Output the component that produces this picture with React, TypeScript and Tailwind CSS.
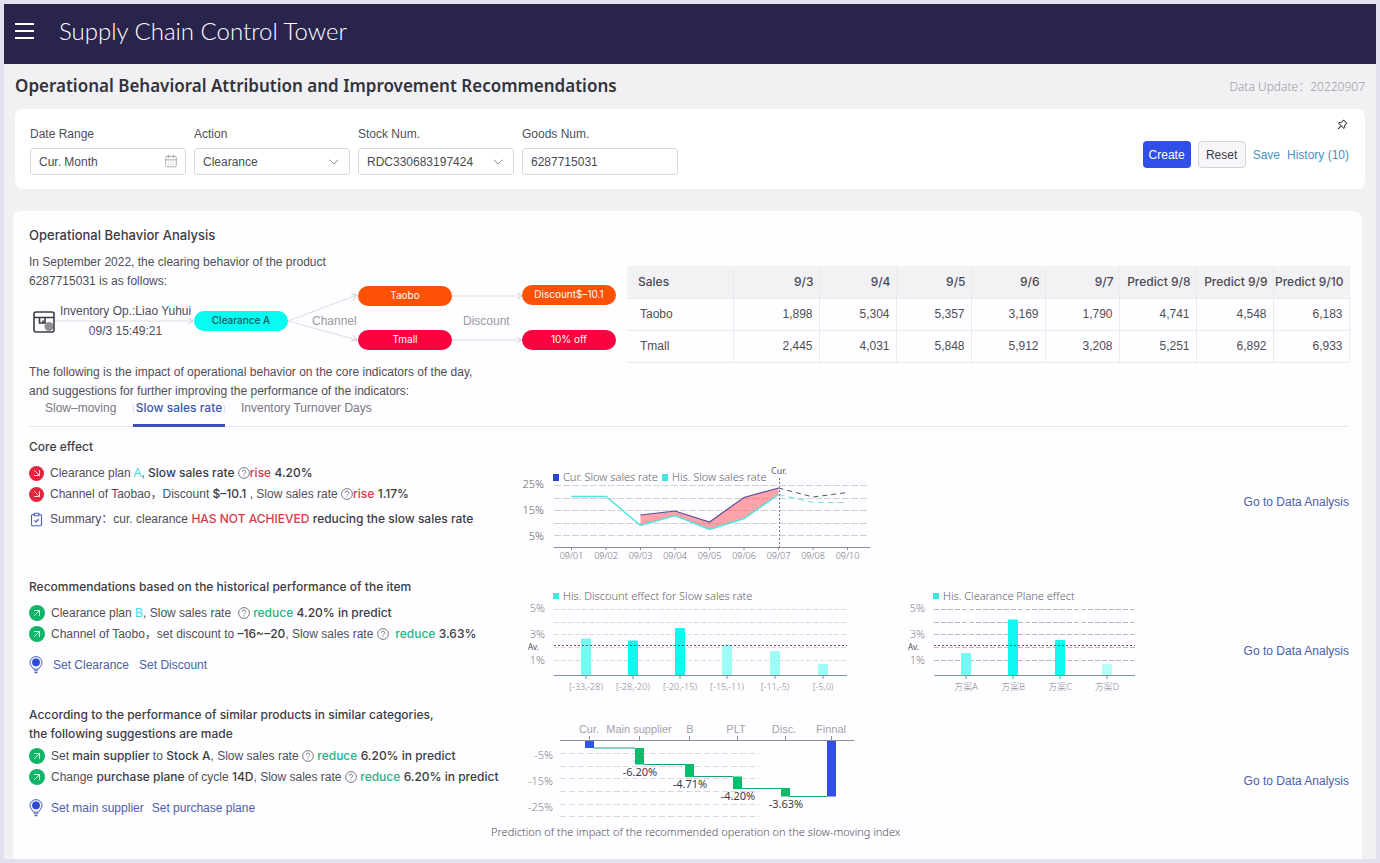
import React from "react";
import { ArrowDownRight, ArrowUpRight, CalendarDays, ChevronDown, ClipboardCheck } from "lucide-react";
import { AiOutlinePushpin } from "react-icons/ai";

const salesHead = ["9/3", "9/4", "9/5", "9/6", "9/7", "Predict 9/8", "Predict 9/9", "Predict 9/10"];
const salesRows = [
  { name: "Taobo", values: ["1,898", "5,304", "5,357", "3,169", "1,790", "4,741", "4,548", "6,183"] },
  { name: "Tmall", values: ["2,445", "4,031", "5,848", "5,912", "3,208", "5,251", "6,892", "6,933"] },
];

const HelpIcon = () => (
  <svg viewBox="0 0 12 12" className="inline-block size-3 shrink-0 align-[-2px]" fill="none" stroke="#6b6b76">
    <circle cx="6" cy="6" r="5.4" strokeWidth="0.9" />
    <path d="M4.3 4.8a1.7 1.7 0 1 1 2.5 1.5c-.5.3-.8.5-.8 1.1M6 8.4v.9" strokeWidth="0.9" />
  </svg>
);

const BulbIcon = () => (
  <svg viewBox="0 0 14 18" className="h-[18px] w-[14px] shrink-0" fill="none" stroke="#4c61b8">
    <path d="M4.5 13.2C3.6 11.2 1 9.7 1 6.6a6 6 0 0 1 12 0c0 3.1-2.6 4.6-3.5 6.6z" fill="#eef0fb" />
    <circle cx="7" cy="6.3" r="3.9" fill="#2f49d1" stroke="none" />
    <path d="M5 14.8h4M5.6 16.6h2.8" strokeWidth="1.1" />
  </svg>
);

const StoreIcon = () => (
  <svg viewBox="0 0 22 22" className="size-[22px]" fill="none" stroke="#3c3c44" strokeWidth="1.6">
    <circle cx="16" cy="15.5" r="4.5" fill="#8f8f96" stroke="none" />
    <rect x="1" y="1" width="20" height="20" rx="2" />
    <path d="M1 6.5h20M6.500 7v5h3.500V9.500M10 12h2V7" />
  </svg>
);

const Down = () => (
  <span className="flex size-[15px] shrink-0 items-center justify-center rounded-full bg-[#e0263c] text-[#ffd5d8]">
    <ArrowDownRight size={12} />
  </span>
);

const Up = () => (
  <span className="flex size-4 shrink-0 items-center justify-center rounded-full bg-[#10b668] text-[#d3ffe8]">
    <ArrowUpRight size={12} />
  </span>
);

const Line: any = ({ icon, children }: any) => (
  <li className="flex h-[21px] items-center gap-1.5 whitespace-pre">
    {icon}
    <span>{children}</span>
  </li>
);

const B: any = ({ children }: any) => <span className="font-[Inter] font-medium text-[#3c3c44]">{children}</span>;
const Red: any = ({ children }: any) => <span className="font-[Inter] font-medium text-[#d63c4c]">{children}</span>;
const Green: any = ({ children }: any) => <span className="font-[Inter] font-medium text-[#27b383]">{children}</span>;

const Field: any = ({ id, label, children }: any) => (
  <div className="w-[156px]">
    <label htmlFor={id} className="block leading-4">
      {label}
    </label>
    <div className="relative mt-1.5">{children}</div>
  </div>
);

const fieldClass =
  "block h-[27px] w-full appearance-none rounded-[3px] border border-[#d9d9de] bg-white px-2 text-xs text-[#4a4a52]";

const Pill: any = ({ className, children }: any) => (
  <span
    className={`absolute flex h-5 w-[94px] items-center justify-center rounded-full font-[Inter] text-[10px] ${className}`}
  >
    {children}
  </span>
);

const Flow = () => (
  <div className="relative -mt-1.5 h-[66px] w-[588px]">
    <svg viewBox="0 0 588 66" className="h-[66px] w-[588px]" fill="none" stroke="#dcdce3">
      <path d="M26 36h138M259 36L328 10M259 36L328 55M423 11h70M423 55h70" />
      <path d="M159 33l5 3l-5 3M322 9l6 1l-4 5M324 50l4 5l-6 1M488 8l5 3l-5 3M488 52l5 3l-5 3" stroke="#cfcfd8" />
    </svg>
    <span className="absolute top-[26px] left-1">
      <StoreIcon />
    </span>
    <span className="absolute top-4 left-[31px] w-[131px] text-center leading-5 whitespace-nowrap">
      Inventory Op.:Liao Yuhui
    </span>
    <span className="absolute top-9 left-[31px] w-[131px] text-center leading-5">09/3 15:49:21</span>
    <Pill className="top-[26px] left-[165px] bg-[#08fbf0] font-medium text-[#17585f]">Clearance A</Pill>
    <span className="absolute top-[26px] left-[283px] leading-5 text-[#9a9aa3]">Channel</span>
    <Pill className="top-px left-[329px] bg-[#fd5206] text-white">Taobo</Pill>
    <Pill className="top-[45px] left-[329px] bg-[#fb0240] text-white">Tmall</Pill>
    <span className="absolute top-[26px] left-[434px] leading-5 text-[#9a9aa3]">Discount</span>
    <Pill className="top-0 left-[493px] bg-[#fd5206] text-white">Discount$–10.1</Pill>
    <Pill className="top-[45px] left-[493px] bg-[#fb0240] text-white">10% off</Pill>
  </div>
);

const SalesTable = () => (
  <table className="mt-[13px] w-full table-fixed border-collapse text-right">
    <colgroup>
      <col className="w-[106px]" />
      <col className="w-[86px]" />
      <col className="w-[77px]" />
      <col className="w-[75px]" />
      <col className="w-[74px]" />
      <col className="w-[74px]" />
      <col className="w-[77px]" />
      <col className="w-[77px]" />
      <col className="w-[76px]" />
    </colgroup>
    <thead>
      <tr className="h-8 bg-[#f2f2f5] font-[Inter] text-[#4a4a52]">
        <th className="border-r border-b border-[#ebebef] pl-[11px] text-left font-medium">Sales</th>
        {salesHead.map((day) => (
          <th key={day} className="border-r border-b border-[#ebebef] pr-[5px] font-medium whitespace-nowrap">
            {day}
          </th>
        ))}
      </tr>
    </thead>
    <tbody>
      {salesRows.map((row) => (
        <tr key={row.name} className="h-8">
          <td className="border-r border-b border-[#ebebef] pl-[13px] text-left">{row.name}</td>
          {row.values.map((value) => (
            <td key={value} className="border-r border-b border-[#ebebef] pr-[6px]">
              {value}
            </td>
          ))}
        </tr>
      ))}
    </tbody>
  </table>
);

const days = ["09/01", "09/02", "09/03", "09/04", "09/05", "09/06", "09/07", "09/08", "09/10"];
const dayX = (i: number) => 51.5 + 34.5 * i;
const curRate = [53, 49, 60, 35.5, 26];
const hisRate = [34.5, 34.5, 63.5, 53.5, 67.5, 56.5, 32.5];
const points = (ys: number[], start: number) => ys.map((y, i) => `${dayX(i + start)},${y}`);

const RateChart = () => (
  <svg viewBox="0 0 352 102" className="h-[102px] w-[352px] font-light" fill="#5f5f68">
    <rect x="33" y="12" width="6" height="7" fill="#2b44cf" />
    <text x="43" y="19" fontSize="11">Cur. Slow sales rate</text>
    <rect x="142" y="12" width="6" height="7" fill="#3fe8dc" />
    <text x="152" y="19" fontSize="11">His. Slow sales rate</text>
    <text x="259" y="12" fontSize="9" textAnchor="middle" fontWeight="400">Cur.</text>
    {["25%", "15%", "5%"].map((t, i) => (
      <text key={t} x="24" y={26 + 26 * i} fontSize="11" textAnchor="end">{t}</text>
    ))}
    {[23.5, 36.5, 48.5, 61.5, 73.5].map((y) => (
      <path key={y} d={`M34 ${y}H347`} stroke="#d3cfd6" strokeDasharray="7 2" />
    ))}
    <path d="M34 85.5H350" stroke="#8d8d96" />
    <polygon points={[...points(curRate, 2), ...points(hisRate.slice(2), 2).reverse()].join(" ")} fill="#ff4a55" fillOpacity="0.5" />
    <polyline points={points(hisRate, 0).join(" ")} fill="none" stroke="#4fe3da" strokeWidth="1.5" />
    <polyline points={points(curRate, 2).join(" ")} fill="none" stroke="#5a4ba0" strokeWidth="1.2" />
    <polyline points={points([32.5, 40.5, 40.5], 6).join(" ")} fill="none" stroke="#7ce9e2" strokeDasharray="6 4" strokeWidth="1.2" />
    <polyline points={points([26, 35, 30.5], 6).join(" ")} fill="none" stroke="#55555e" strokeDasharray="5 4" />
    <path d="M259.5 16V85" stroke="#77777f" strokeDasharray="2 2" />
    {days.map((d, i) => (
      <g key={d}>
        <path d={`M${dayX(i)} 85v3`} stroke="#8d8d96" />
        <text x={dayX(i)} y="97" fontSize="9" textAnchor="middle" fill="#6f6f78">{d}</text>
      </g>
    ))}
  </svg>
);

const discountBars = [
  { label: "[-33,-28)", x: 66, y: 52.5, fill: "#74fbf3" },
  { label: "[-28,-20)", x: 113, y: 54.5, fill: "#0df8ee" },
  { label: "[-20,-15)", x: 160, y: 42, fill: "#0df8ee" },
  { label: "[-15,-11)", x: 207, y: 58.5, fill: "#9dfcf6" },
  { label: "[-11,-5)", x: 255, y: 65, fill: "#9dfcf6" },
  { label: "[-5,0)", x: 303, y: 78, fill: "#9dfcf6" },
];
const planBars = [
  { label: "方案A", x: 66, y: 67, fill: "#74fbf3" },
  { label: "方案B", x: 113, y: 33.5, fill: "#0df8ee" },
  { label: "方案C", x: 160, y: 54, fill: "#0df8ee" },
  { label: "方案D", x: 207, y: 78, fill: "#b4fdf9" },
];

const BarChart: any = ({ title, bars, width, end, grid }: any) => (
  <svg viewBox={`0 0 ${width} 108`} width={width} height="108" className="shrink-0 font-light" fill="#85858e">
    <rect x="33" y="7" width="6" height="6" fill="#3fe8dc" />
    <text x="43" y="14" fontSize="11" fill="#5f5f68">{title}</text>
    {["5%", "3%", "1%"].map((t, i) => (
      <text key={t} x="25" y={26 + 26 * i} fontSize="11" textAnchor="end">{t}</text>
    ))}
    <text x="19" y="64" fontSize="8" textAnchor="end" fill="#4a4a52" fontWeight="400">Av.</text>
    {[23.5, 36.5, 48.5, 61.5, 74.5].map((y) => (
      <path key={y} d={`M34 ${y}H${end}`} stroke={grid} strokeDasharray="5 2" />
    ))}
    {bars.map((bar: any) => (
      <g key={bar.label}>
        <path d={`M${bar.x - 5} 89V${bar.y + 1}q0-1 1-1h8q1 0 1 1V89z`} fill={bar.fill} />
        <path d={`M${bar.x} 89v4`} stroke="#5f9c9c" />
        <text x={bar.x} y="104" fontSize="9" textAnchor="middle">{bar.label}</text>
      </g>
    ))}
    <path d={`M34 59.5H${end}`} stroke="#7a4570" strokeDasharray="2 2" />
    <path d={`M34 89.5H${end}`} stroke="#7f9696" />
  </svg>
);

const steps = [
  { label: "Cur.", at: 69, x: 65, top: 24, bottom: 32, fill: "#2f55e3" },
  { label: "Main supplier", at: 119, x: 115, top: 32, bottom: 48.5, fill: "#0dbb6c", value: "-6.20%" },
  { label: "B", at: 170, x: 165, top: 48, bottom: 61, fill: "#0dbb6c", value: "-4.71%" },
  { label: "PLT", at: 216, x: 213, top: 60.5, bottom: 73, fill: "#0dbb6c", value: "-4.20%" },
  { label: "Disc.", at: 264, x: 261, top: 72, bottom: 80.5, fill: "#0dbb6c", value: "-3.63%" },
  { label: "Finnal", at: 311, x: 307, top: 24, bottom: 80.5, fill: "#2f4fe8" },
];

const WaterfallChart = () => (
  <svg viewBox="0 0 340 104" className="h-[104px] w-[340px] font-light" fill="#85858e">
    {[37.5, 50.5, 62.5, 75.5, 88.5, 100.5].map((y) => (
      <path key={y} d={`M40 ${y}H239`} stroke="#dcd5de" strokeDasharray="6 3" />
    ))}
    {["-5%", "-15%", "-25%"].map((t, i) => (
      <text key={t} x="33" y={43 + 26 * i} fontSize="11" textAnchor="end">{t}</text>
    ))}
    <path d="M74 32H115M124 48.5H165M174 60.5H213M222 72.5H261M270 80.5H307" stroke="#1a9f70" />
    {steps.map((s) => (
      <g key={s.label}>
        <text x={s.at} y="17" fontSize="11" textAnchor="middle" className="font-['Liberation_Sans']" fill="#a3a3ac">
          {s.label}
        </text>
        <path d={`M${s.x + 4.5} 20v4`} stroke="#8d8d96" />
        <rect x={s.x} y={s.top} width="9" height={s.bottom - s.top} fill={s.fill} />
        {s.value && (
          <text x={s.x + 5} y={s.bottom + 11} fontSize="11" textAnchor="middle" fill="#3c3c44" fontWeight="400">
            {s.value}
          </text>
        )}
      </g>
    ))}
    <path d="M40 24.5H334" stroke="#8d8d96" />
  </svg>
);

const Analysis = () => (
  <a href="#analysis" className="leading-5 whitespace-nowrap text-[#4c61a8]">
    Go to Data Analysis
  </a>
);

export default function App() {
  return (
    <div className="flex min-h-screen flex-col border-4 border-[#e1e1ef] bg-[#f1f1f4] font-['Liberation_Sans','Noto_Sans_CJK_SC',sans-serif] text-xs text-[#4f4f58]">
      <header className="flex h-[60px] shrink-0 items-center gap-[25px] bg-[#29244c] pb-1.5 pl-[11px] text-white">
        <button type="button" aria-label="Menu" className="flex w-[19px] flex-col gap-[5px]">
          <span className="h-0.5 bg-white" />
          <span className="h-0.5 bg-white" />
          <span className="h-0.5 bg-white" />
        </button>
        <span className="font-[Lato] text-2xl font-light">Supply Chain Control Tower</span>
      </header>

      <div className="flex h-[45px] items-center justify-between px-[11px]">
        <h1 className="font-['Noto_Sans'] text-[17px] font-semibold text-[#33333a]">
          Operational Behavioral Attribution and Improvement Recommendations
        </h1>
        <span className="font-['Noto_Sans','Noto_Sans_CJK_SC'] font-light text-[#9a9aa3]">Data Update：20220907</span>
      </div>

      <form className="mx-[11px] flex h-20 justify-between rounded-lg bg-white pr-4 pl-[15px]">
        <div className="flex gap-2 pt-[17px]">
          <Field id="range" label="Date Range">
            <input id="range" className={fieldClass} defaultValue="Cur. Month" />
            <CalendarDays size={14} strokeWidth={1.2} className="absolute top-1.5 right-2 text-[#8d8d96]" />
          </Field>
          <Field id="action" label="Action">
            <select id="action" className={fieldClass}>
              <option>Clearance</option>
            </select>
            <ChevronDown size={16} strokeWidth={1.5} className="absolute top-1.5 right-2 text-[#8d8d96]" />
          </Field>
          <Field id="stock" label="Stock Num.">
            <select id="stock" className={fieldClass}>
              <option>RDC330683197424</option>
            </select>
            <ChevronDown size={16} strokeWidth={1.5} className="absolute top-1.5 right-2 text-[#8d8d96]" />
          </Field>
          <Field id="goods" label="Goods Num.">
            <input id="goods" className={fieldClass} defaultValue="6287715031" />
          </Field>
        </div>
        <div className="flex flex-col items-end gap-2.5 pt-[9px]">
          <button type="button" aria-label="Pin" className="text-[#33333a]">
            <AiOutlinePushpin size={13} />
          </button>
          <div className="flex items-center gap-[7px]">
            <button type="button" className="h-[27px] w-12 rounded bg-[#2f4fe8] text-white">
              Create
            </button>
            <button type="button" className="h-[27px] w-12 rounded border border-[#d3d3d9] bg-[#f8f5f9] text-[#3c3c44]">
              Reset
            </button>
            <a href="#save" className="text-[#4693bf]">Save</a>
            <a href="#history" className="text-[#4693bf]">History (10)</a>
          </div>
        </div>
      </form>

      <main className="mt-[22px] mr-3.5 ml-[9px] grow rounded-t-lg bg-[#fefdff] pt-3.5 pr-[13px] pb-4 pl-4">
        <h2 className="font-[Inter] text-[13px] leading-5 font-medium text-[#3c3c44]">Operational Behavior Analysis</h2>
        <div className="mt-2 flex gap-[10px]">
          <div className="shrink-0">
            <p className="leading-[19px]">
              In September 2022, the clearing behavior of the product
              <br />
              6287715031 is as follows:
            </p>
            <Flow />
          </div>
          <SalesTable />
        </div>
        <p className="leading-[19px]">
          The following is the impact of operational behavior on the core indicators of the day,
          <br />
          and suggestions for further improving the performance of the indicators:
        </p>

        <nav className="flex h-[26px] items-stretch border-b border-[#e6e6ec] leading-[14px] text-[#77777f]">
          <a href="#moving" className="w-[104px] pl-4">Slow–moving</a>
          <a
            href="#rate"
            className="-mb-px flex w-[92px] items-start justify-between border-b-3 border-[#3f51b5] font-[Inter] font-medium text-[#3d55b0]"
          >
            <span className="mt-1 h-2 w-px bg-[#dcdce6]" />
            Slow sales rate
            <span className="mt-1 h-2 w-px bg-[#dcdce6]" />
          </a>
          <a href="#turnover" className="pl-4">Inventory Turnover Days</a>
        </nav>

        <section className="grid min-h-[140px] grid-cols-[462px_1fr_auto]">
          <div className="pt-2.5">
            <h3 className="font-[Inter] leading-5 font-medium text-[#3c3c44]">Core effect</h3>
            <ul className="mt-1.5">
              <Line icon={<Down />}>
                Clearance plan <span className="text-[#3be0cf]">A</span>, <B>Slow sales rate</B>{" "}
                <HelpIcon />
                <Red>rise</Red> <B>4.20%</B>
              </Line>
              <Line icon={<Down />}>
                Channel of Taobao，Discount <B>$–10.1</B> , Slow sales rate <HelpIcon />
                <Red>rise</Red> <B>1.17%</B>
              </Line>
            </ul>
            <p className="mt-1 flex h-[21px] items-center gap-1.5">
              <ClipboardCheck size={15} strokeWidth={1.8} className="text-[#4c61b8]" />
              <span>
                Summary：cur. clearance <Red>HAS NOT ACHIEVED</Red> <B>reducing the slow sales rate</B>
              </span>
            </p>
          </div>
          <div className="pt-[35px] pl-[29px] font-['Noto_Sans']">
            <RateChart />
          </div>
          <div className="pt-[65px]">
            <Analysis />
          </div>
        </section>

        <section className="grid min-h-32 grid-cols-[462px_1fr_auto]">
          <div className="pt-2.5">
            <h3 className="font-[Inter] leading-5 font-medium text-[#3c3c44]">
              Recommendations based on the historical performance of the item
            </h3>
            <ul className="mt-1.5">
              <Line icon={<Up />}>
                Clearance plan <span className="text-[#3be0e8]">B</span>, Slow sales rate{"  "}
                <HelpIcon /> <Green>reduce</Green> <B>4.20% in predict</B>
              </Line>
              <Line icon={<Up />}>
                Channel of Taobo，set discount to <B>–16~–20</B>, Slow sales rate <HelpIcon />{"  "}
                <Green>reduce</Green> <B>3.63%</B>
              </Line>
            </ul>
            <p className="mt-2.5 flex h-5 items-center gap-2.5 text-[#4c61a8]">
              <BulbIcon />
              <a href="#clearance">Set Clearance</a>
              <a href="#discount">Set Discount</a>
            </p>
          </div>
          <div className="flex gap-10 pt-[19px] pl-[29px] font-['Noto_Sans','Noto_Sans_CJK_SC']">
            <BarChart title="His. Discount effect for Slow sales rate" bars={discountBars} width={340} end={327} grid="#dcd5de" />
            <BarChart title="His. Clearance Plane effect" bars={planBars} width={240} end={235} grid="#bdb6bf" />
          </div>
          <div className="pt-[74px]">
            <Analysis />
          </div>
        </section>

        <section className="grid grid-cols-[462px_1fr_auto]">
          <div className="pt-2.5">
            <h3 className="font-[Inter] leading-[19px] font-medium text-[#3c3c44]">
              According to the performance of similar products in similar categories,
              <br />
              the following suggestions are made
            </h3>
            <ul className="mt-[3px]">
              <Line icon={<Up />}>
                Set <B>main supplier</B> to <B>Stock A</B>, Slow sales rate <HelpIcon />{" "}
                <Green>reduce</Green> <B>6.20% in predict</B>
              </Line>
              <Line icon={<Up />}>
                Change <B>purchase plane</B> of cycle <B>14D</B>, Slow sales rate <HelpIcon />{" "}
                <Green>reduce</Green> <B>6.20% in predict</B>
              </Line>
            </ul>
            <p className="mt-2.5 flex h-5 items-center gap-2 text-[#4c61a8]">
              <BulbIcon />
              <a href="#supplier">Set main supplier</a>
              <a href="#purchase">Set purchase plane</a>
            </p>
          </div>
          <figure className="pt-[21px] font-['Noto_Sans']">
            <div className="pl-[29px]">
              <WaterfallChart />
            </div>
            <figcaption className="mt-0.5 text-[11px] leading-5 font-light">
              Prediction of the impact of the recommended operation on the slow-moving index
            </figcaption>
          </figure>
          <div className="pt-[76px]">
            <Analysis />
          </div>
        </section>
      </main>
    </div>
  );
}
